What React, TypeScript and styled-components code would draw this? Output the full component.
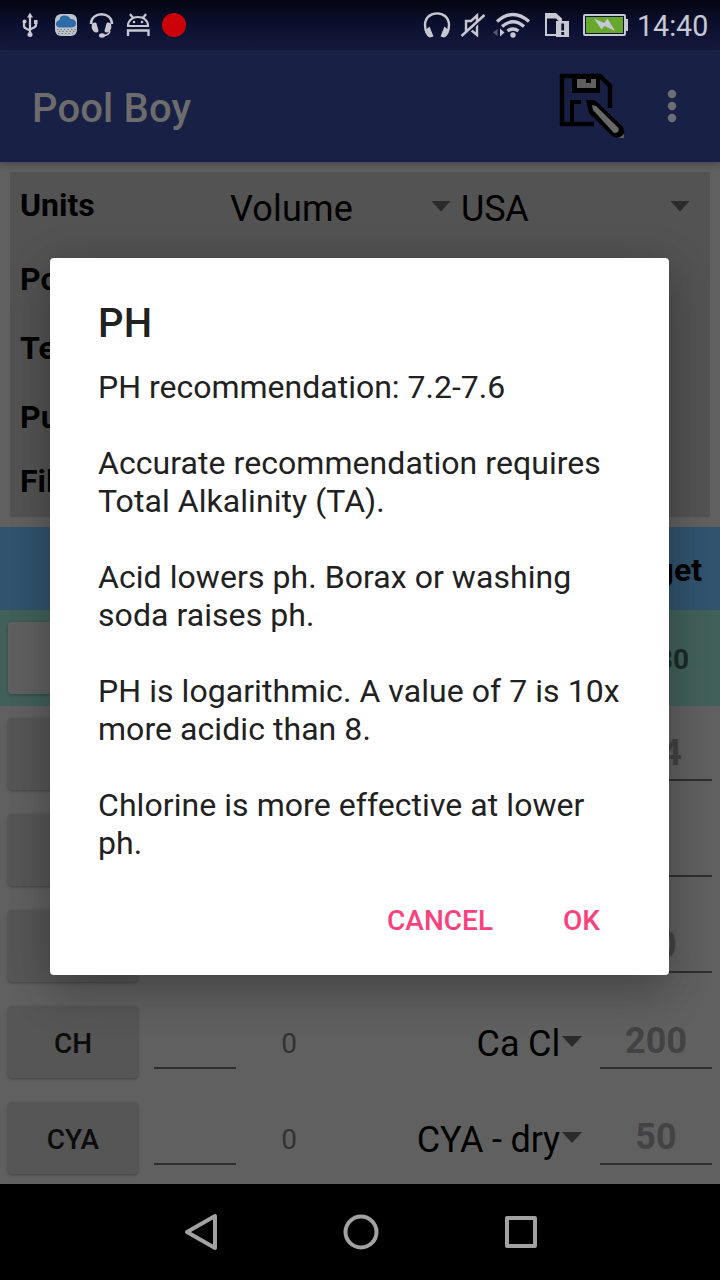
import React from "react";
import styled, { createGlobalStyle } from "styled-components";

const Global = createGlobalStyle`
  * { box-sizing: border-box; }
  body { margin: 0; background: #000; font-family: Roboto, sans-serif; }
`;

const Screen = styled.div`
  position: relative;
  width: 720px;
  height: 1280px;
  overflow: hidden;
  display: flex;
  flex-direction: column;
  background: #606060;
  color: #000;
`;

const StatusBar = styled.header`
  flex: none;
  height: 50px;
  display: flex;
  justify-content: space-between;
  background: linear-gradient(#03050f, #0c1030 50%, #141a3d);
`;

const StatusIcons = styled.svg`
  display: block;
  flex: none;
`;

const StatusRight = styled.div`
  display: flex;
  align-items: center;
  padding-right: 12px;
`;

const Clock = styled.span`
  width: 71px;
  font-size: 28.6px;
  line-height: 50px;
  color: #c7c8d2;
  padding-top: 2px;
  white-space: nowrap;
`;

const AppBar = styled.div`
  flex: none;
  height: 112px;
  display: flex;
  align-items: center;
  justify-content: space-between;
  padding: 4px 0 0 32px;
  background: #192045;
  box-shadow: 0 2px 8px rgba(0, 0, 0, 0.3);
  z-index: 1;
`;

const AppTitle = styled.h1`
  margin: 0;
  padding-top: 2px;
  font-size: 40px;
  font-weight: 500;
  line-height: 48px;
  letter-spacing: 0.15px;
  color: #6c6c6c;
`;

const BarActions = styled.svg`
  display: block;
  margin-top: -4px;
`;

const Content = styled.main`
  flex: none;
  height: 1022px;
  overflow: hidden;
`;

const SettingsPanel = styled.section`
  margin: 10px;
  height: 345px;
  background: #535353;
`;

const SettingRow = styled.div<{ $h: number }>`
  height: ${(p) => p.$h}px;
  display: flex;
  align-items: center;
  padding: 0 10px;
`;

const SettingLabel = styled.span<{ $raised?: boolean }>`
  width: 210px;
  margin-top: ${(p) => (p.$raised ? -2 : 0)}px;
  font-size: 32px;
  font-weight: 700;
`;

const Spinner = styled.span<{ $w: number; $indent?: number }>`
  width: ${(p) => p.$w}px;
  display: flex;
  align-items: center;
  justify-content: space-between;
  font-size: 36px;
  letter-spacing: ${(p) => (p.$indent ? -0.2 : 0.2)}px;
  padding: 6px 0 0 ${(p) => p.$indent ?? 0}px;
`;

const Caret = styled.i`
  flex: none;
  width: 20px;
  height: 11px;
  margin-bottom: 5px;
  background: #2b2b2b;
  clip-path: polygon(0 0, 100% 0, 50% 100%);
`;

const HeadRow = styled.div`
  height: 83px;
  display: flex;
  align-items: center;
  justify-content: flex-end;
  padding: 2px 18px 0 0;
  background: #31536e;
  font-size: 32px;
  font-weight: 700;
`;

const ChemRow = styled.div<{ $tint?: boolean }>`
  height: 96px;
  display: flex;
  padding: 12px 8px 0;
  background: ${(p) => (p.$tint ? "#41605a" : "transparent")};
`;

const ChemButton = styled.button<{ $light?: boolean }>`
  flex: none;
  width: 130px;
  height: 72px;
  border: 0;
  border-radius: 4px;
  padding: 4px 0 0;
  font: 500 28px/34px Roboto, sans-serif;
  color: #0c0c0c;
  background: ${(p) => (p.$light ? "#606060" : "#565656")};
  box-shadow: 0 1px 3px rgba(0, 0, 0, 0.3);
`;

const Reading = styled.span`
  flex: none;
  width: 82px;
  height: 63px;
  margin-left: 16px;
  border-bottom: 2px solid #2e2e2e;
`;

const Result = styled.span`
  width: 106px;
  text-align: center;
  font-size: 28px;
  line-height: 76px;
  color: #323232;
`;

const Chemical = styled.span`
  flex: 1;
  height: 76px;
  display: flex;
  justify-content: flex-end;
  align-items: center;
  gap: 2px;
  margin-right: 18px;
  font-size: 36px;
  letter-spacing: -0.15px;
  white-space: nowrap;
`;

const Target = styled.span<{ $small?: boolean }>`
  flex: none;
  width: 112px;
  height: 63px;
  text-align: ${(p) => (p.$small ? "right" : "center")};
  padding-right: ${(p) => (p.$small ? 23 : 0)}px;
  border-bottom: ${(p) => (p.$small ? 0 : 2)}px solid #2e2e2e;
  font-size: ${(p) => (p.$small ? 28 : 36)}px;
  line-height: ${(p) => (p.$small ? 76 : 70)}px;
  font-weight: 700;
  color: ${(p) => (p.$small ? "#1c2b28" : "#434343")};
`;

const DialogLayer = styled.div`
  position: absolute;
  inset: 258px 51px auto 50px;
  z-index: 2;
`;

const Dialog = styled.div`
  height: 717px;
  display: flex;
  flex-direction: column;
  padding: 42px 48px 0;
  border-radius: 4px;
  background: #fff;
  color: #212121;
  box-shadow: 0 22px 44px rgba(0, 0, 0, 0.16), 0 4px 40px rgba(0, 0, 0, 0.18);
`;

const DialogTitle = styled.h2`
  margin: 0 0 20px;
  font-size: 40px;
  font-weight: 500;
  line-height: 48px;
  letter-spacing: 0.3px;
`;

const DialogText = styled.p<{ $tight?: boolean }>`
  margin: 0 0 38px;
  font-size: 32px;
  line-height: 38px;
  letter-spacing: ${(p) => (p.$tight ? 0 : 0.06)}px;
  white-space: pre;
`;

const DialogActions = styled.div`
  display: flex;
  justify-content: flex-end;
  gap: 70px;
  padding-right: 21px;
  margin-top: 4px;
`;

const DialogButton = styled.button`
  border: 0;
  padding: 0;
  background: none;
  font: 500 28px/34px Roboto, sans-serif;
  color: #f8417e;
`;

const NavBar = styled.nav`
  flex: none;
  height: 96px;
  background: #000;
  z-index: 1;
`;

type Chem = { id: string; name?: string; result?: string; chemical?: string; target?: string };

const rows: Chem[] = [
  { id: "ph", target: "7.4" },
  { id: "fc" },
  { id: "ta", target: "80" },
  { id: "ch", name: "CH", result: "0", chemical: "Ca Cl", target: "200" },
  { id: "cya", name: "CYA", result: "0", chemical: "CYA - dry", target: "50" },
];

const paragraphs = [
  "PH recommendation: 7.2-7.6",
  "Accurate recommendation requires\nTotal Alkalinity (TA).",
  "Acid lowers ph. Borax or washing\nsoda raises ph.",
  "PH is logarithmic. A value of 7 is 10x\nmore acidic than 8.",
  "Chlorine is more effective at lower\nph.",
];

const INK = "#c7c8d2";

function LeftIcons() {
  return (
    <StatusIcons width="200" height="50" viewBox="0 0 200 50" fill="none" stroke={INK} strokeWidth="2">
      <path d="M30 16v18M24 23v3q0 2 3 3l3 1.500M36 22v3q0 2-3 3l-3 1.500" strokeWidth="2.200" />
      <path d="M27 17.500l3-5 3 5z" fill={INK} stroke="none" />
      <circle cx="30" cy="34.500" r="2.500" fill={INK} stroke="none" />
      <circle cx="24.500" cy="21.500" r="2" fill={INK} stroke="none" />
      <path d="M34 20h3.500v4h-3.500z" fill={INK} stroke="none" />
      <rect x="55" y="14" width="22" height="22" rx="6" fill="#bdc3ca" stroke="none" />
      <path d="M59.500 27.500q-4-1-3.500-4t3.500-3.500q0-4.500 5-4.500 4.500 0 6 3.500 5 0 5.500 4t-4.500 4.500z" fill="#2c6aa8" stroke="none" />
      <path d="M57 29.500h19M59 31.500h16M58 33.500h15" stroke="#70757b" strokeDasharray="1.500 2" strokeWidth="1" />
      <path d="M91 24c0-13 21-13 21 0" strokeWidth="2.400" />
      <path d="M92 23.500q4-2 4.500 0l2 7q0 2-3 2-5-2-3.500-9zM111 23.500q-4-2-4.500 0l-2 7q0 2 3 2 5-2 3.500-9z" fill={INK} stroke="none" />
      <path d="M110 31q-1 4.500-7 4.500" strokeWidth="1.500" />
      <ellipse cx="102" cy="35.500" rx="3" ry="2.200" fill={INK} stroke="none" />
      <path d="M128 26c0-12 20-12 20 0zM130 14l3 4M146 14l-3 4" strokeWidth="2.200" />
      <circle cx="134" cy="22" r="1.300" fill={INK} stroke="none" />
      <circle cx="142" cy="22" r="1.300" fill={INK} stroke="none" />
      <path d="M128 36v-5.500h20.500v5.500" strokeWidth="2.400" />
      <circle cx="174" cy="25" r="12" fill="#cb0309" stroke="none" />
    </StatusIcons>
  );
}

function RightIcons() {
  return (
    <StatusIcons width="220" height="50" viewBox="417 0 220 50" fill="none" stroke={INK} strokeWidth="2">
      <path d="M427 33q-2-3-2-8c0-15.500 24-15.500 24 0q0 5-2 8" strokeWidth="2.400" />
      <path d="M429.500 26.500l4 10-3.500 1q-4-1-5-7zM444.500 26.500l-4 10 3.500 1q4-1 5-7z" fill={INK} stroke="none" />
      <path d="M477 15.500v19.500l-6-5h-5V21h5z" strokeWidth="2.400" />
      <path d="M463 37l22-21" stroke="#10163a" strokeWidth="3" />
      <path d="M461.500 36l23-21" strokeWidth="2.400" />
      <path d="M497 21.500q16-14 32 0M502 26.500q11-9.500 22 0M507.500 31q5.500-4 11 0" strokeWidth="3.200" />
      <circle cx="513" cy="35" r="2.700" fill={INK} stroke="none" />
      <path d="M493 32.500l4.500-3.500v7z" fill="#555970" stroke="none" />
      <path d="M500 28.500l4.500 4-4.500 4z" fill={INK} stroke="none" />
      <path d="M557 35h-11V14.500" />
      <path d="M545 13h11l6 5.500v3h-3l-3-3h-11z" fill={INK} stroke="none" />
      <path d="M556 21h13v16h-13z" fill={INK} stroke="none" />
      <path d="M562.700 23.500v7M562.700 32v3" stroke="#10163a" strokeWidth="2.800" />
      <rect x="584" y="15" width="41" height="20" rx="1" fill="#66a72c" />
      <rect x="585.500" y="16.500" width="38" height="17" stroke="#10163a" strokeWidth="1" />
      <path d="M626 19h2v12h-2z" fill={INK} stroke="none" />
      <path d="M594 18.500l10 4.500 3.500-4.500 7.500 12.500-10.500-5-3 3.500z" fill={INK} stroke="none" />
    </StatusIcons>
  );
}

export default function App() {
  return (
    <>
      <Global />
      <Screen>
        <StatusBar>
          <LeftIcons />
          <StatusRight>
            <RightIcons />
            <Clock>14:40</Clock>
          </StatusRight>
        </StatusBar>
        <AppBar>
          <AppTitle>Pool Boy</AppTitle>
          <BarActions width="170" height="80" viewBox="550 66 170 80">
            <path d="M594 124h-32V76h38l10 10v22" fill="none" stroke="#000" strokeWidth="4.500" />
            <path d="M572 76h28v17h-28z" fill="#000" />
            <path d="M577 79h19v9h-19z" fill="#5f5f5f" />
            <path d="M586 79h5v4h-5z" fill="#000" />
            <path d="M572 124v-22h9" fill="none" stroke="#000" strokeWidth="4" />
            <path d="M618 132h6v6h-6z" fill="#5f5f5f" />
            <path d="M586 100h7q2 0 4 2l25 24q4 5 1 9-5 5-11 1L589 113z" fill="#000" />
            <path d="M592 105l4 1 22.500 22q1.500 5-4.500 5l-21-23z" fill="#686868" />
            <circle cx="672" cy="94" r="4.200" fill="#6c6d75" />
            <circle cx="672" cy="106" r="4.200" fill="#6c6d75" />
            <circle cx="672" cy="118" r="4.200" fill="#6c6d75" />
          </BarActions>
        </AppBar>
        <Content>
          <SettingsPanel>
            <SettingRow $h={67}>
              <SettingLabel $raised>Units</SettingLabel>
              <Spinner $w={221}>Volume<Caret /></Spinner>
              <Spinner $w={239} $indent={10}>USA<Caret /></Spinner>
            </SettingRow>
            <SettingRow $h={79}><SettingLabel>Pool</SettingLabel></SettingRow>
            <SettingRow $h={60}><SettingLabel>Temp</SettingLabel></SettingRow>
            <SettingRow $h={78}><SettingLabel>Pump</SettingLabel></SettingRow>
            <SettingRow $h={50}><SettingLabel>Filter</SettingLabel></SettingRow>
          </SettingsPanel>
          <HeadRow>Target</HeadRow>
          <ChemRow $tint>
            <ChemButton $light />
            <Chemical />
            <Target $small>7.80</Target>
          </ChemRow>
          {rows.map((r) => (
            <ChemRow key={r.id}>
              <ChemButton>{r.name}</ChemButton>
              <Reading />
              <Result>{r.result}</Result>
              <Chemical>{r.chemical}{r.chemical && <Caret />}</Chemical>
              <Target>{r.target}</Target>
            </ChemRow>
          ))}
        </Content>
        <NavBar>
          <svg width="720" height="96" viewBox="0 1184 720 96" fill="none" stroke="#a2a2a2" strokeWidth="4" strokeLinejoin="round">
            <path d="M187 1232l28-16v32z" />
            <circle cx="361" cy="1232" r="15.500" />
            <path d="M507 1218h28v28h-28z" />
          </svg>
        </NavBar>
        <DialogLayer>
          <Dialog role="dialog">
            <DialogTitle>PH</DialogTitle>
            {paragraphs.map((p, i) => (
              <DialogText key={p} $tight={i === 0}>{p}</DialogText>
            ))}
            <DialogActions>
              <DialogButton>CANCEL</DialogButton>
              <DialogButton>OK</DialogButton>
            </DialogActions>
          </Dialog>
        </DialogLayer>
      </Screen>
    </>
  );
}
